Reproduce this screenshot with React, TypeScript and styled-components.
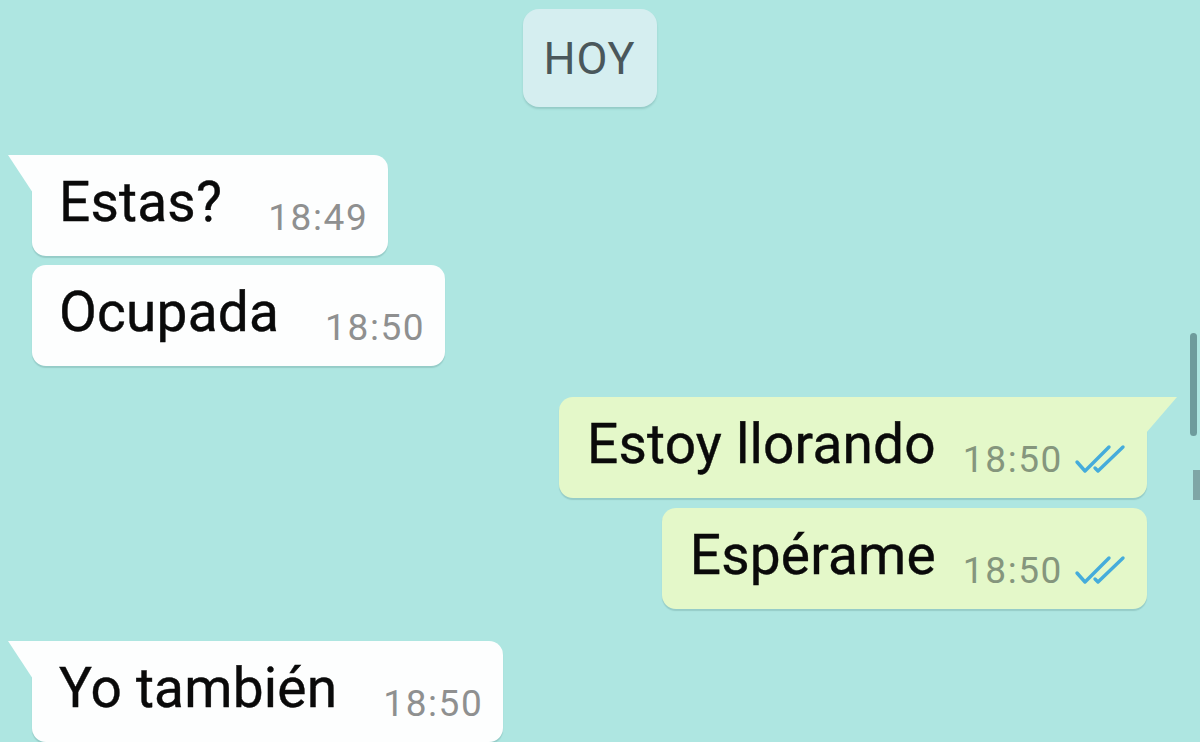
import React from "react";
import styled, { createGlobalStyle, css } from "styled-components";

const GlobalStyle = createGlobalStyle`
    html, body {
        margin: 0;
        padding: 0;
        background: #aee6e1;
    }
    body {
        font-family: Roboto, "Liberation Sans", Arial, sans-serif;
    }
`;

type Side = "in" | "out";

const Screen = styled.div`
    position: relative;
    width: 1200px;
    height: 742px;
    overflow: hidden;
    background: #aee6e1;
`;

const Thread = styled.div`
    display: flex;
    flex-direction: column;
    padding: 9px 53px 0 32px;
`;

const DayPill = styled.div`
    align-self: center;
    margin-bottom: 48px;
    width: 134px;
    height: 98px;
    display: flex;
    align-items: center;
    justify-content: center;
    box-sizing: border-box;
    border-radius: 16px;
    background: #d5eef0;
    box-shadow: 0 2px 2px rgba(60, 110, 110, 0.22);
    color: #4a575b;
    font-size: 45px;
    letter-spacing: 1px;
`;

const Bubble = styled.div<{ $side: Side; $tail?: boolean; $gap: number }>`
    position: relative;
    display: flex;
    align-items: flex-end;
    margin-top: ${(p) => p.$gap}px;
    padding: 17px 20px 24px 27px;
    border-radius: 14px;
    box-shadow: 0 2px 1px rgba(40, 90, 90, 0.18);

    ${(p) =>
        p.$side === "in"
            ? css`
                  align-self: flex-start;
                  background: #fdfefe;
              `
            : css`
                  align-self: flex-end;
                  background: #e4f8c9;
                  padding-left: 28px;
              `}

    ${(p) =>
        p.$tail &&
        p.$side === "in" &&
        css`
            border-top-left-radius: 0;
            &::before {
                content: "";
                position: absolute;
                left: -24px;
                top: 0;
                width: 25px;
                height: 38px;
                background: #fdfefe;
                clip-path: polygon(0 0, 100% 0, 100% 100%);
            }
        `}

    ${(p) =>
        p.$tail &&
        p.$side === "out" &&
        css`
            border-top-right-radius: 0;
            &::after {
                content: "";
                position: absolute;
                right: -30px;
                top: 0;
                width: 31px;
                height: 36px;
                background: #e4f8c9;
                clip-path: polygon(0 0, 100% 0, 0 100%);
            }
        `}
`;

const Text = styled.span`
    font-size: 55px;
    line-height: 60px;
    letter-spacing: 0.2px;
    color: #0a0a0a;
    -webkit-text-stroke: 0.4px #0a0a0a;
    white-space: nowrap;
`;

const Meta = styled.span<{ $side: Side }>`
    display: flex;
    align-items: flex-end;
    margin-left: ${(p) => (p.$side === "in" ? 46 : 27)}px;
    font-size: 37px;
    line-height: 28px;
    letter-spacing: 1.6px;
    color: ${(p) => (p.$side === "in" ? "#8f9090" : "#85967d")};
    white-space: nowrap;
`;

const Ticks = styled.svg`
    margin-left: 10px;
    width: 54px;
    height: 30px;
`;

const ScrollThumb = styled.div`
    position: absolute;
    right: 3px;
    top: 333px;
    width: 7px;
    height: 103px;
    border-radius: 4px;
    background: #6e9b9c;
`;

const ScrollMark = styled.div`
    position: absolute;
    right: 0;
    top: 470px;
    width: 7px;
    height: 30px;
    background: #7fa6a6;
`;

const DoubleCheck = () => (
    <Ticks viewBox="0 0 54 30" fill="none" stroke="#45acdb" strokeWidth="3.4" strokeLinecap="round" strokeLinejoin="round">
        <path d="M4 18 L12 27 L36 3" />
        <path d="M22 24 L25 27 L50 3" />
    </Ticks>
);

type Msg = { side: Side; text: string; time: string; tail?: boolean; gap: number };

const messages: Msg[] = [
    { side: "in", text: "Estas?", time: "18:49", tail: true, gap: 0 },
    { side: "in", text: "Ocupada", time: "18:50", gap: 9 },
    { side: "out", text: "Estoy llorando", time: "18:50", tail: true, gap: 31 },
    { side: "out", text: "Espérame", time: "18:50", gap: 10 },
    { side: "in", text: "Yo también", time: "18:50", tail: true, gap: 32 },
];

export default function App() {
    return (
        <>
            <GlobalStyle />
            <Screen>
                <Thread>
                    <DayPill>HOY</DayPill>
                    {messages.map((m, i) => (
                        <Bubble key={i} $side={m.side} $tail={m.tail} $gap={m.gap}>
                            <Text>{m.text}</Text>
                            <Meta $side={m.side}>
                                {m.time}
                                {m.side === "out" && <DoubleCheck />}
                            </Meta>
                        </Bubble>
                    ))}
                </Thread>
                <ScrollThumb />
                <ScrollMark />
            </Screen>
        </>
    );
}
